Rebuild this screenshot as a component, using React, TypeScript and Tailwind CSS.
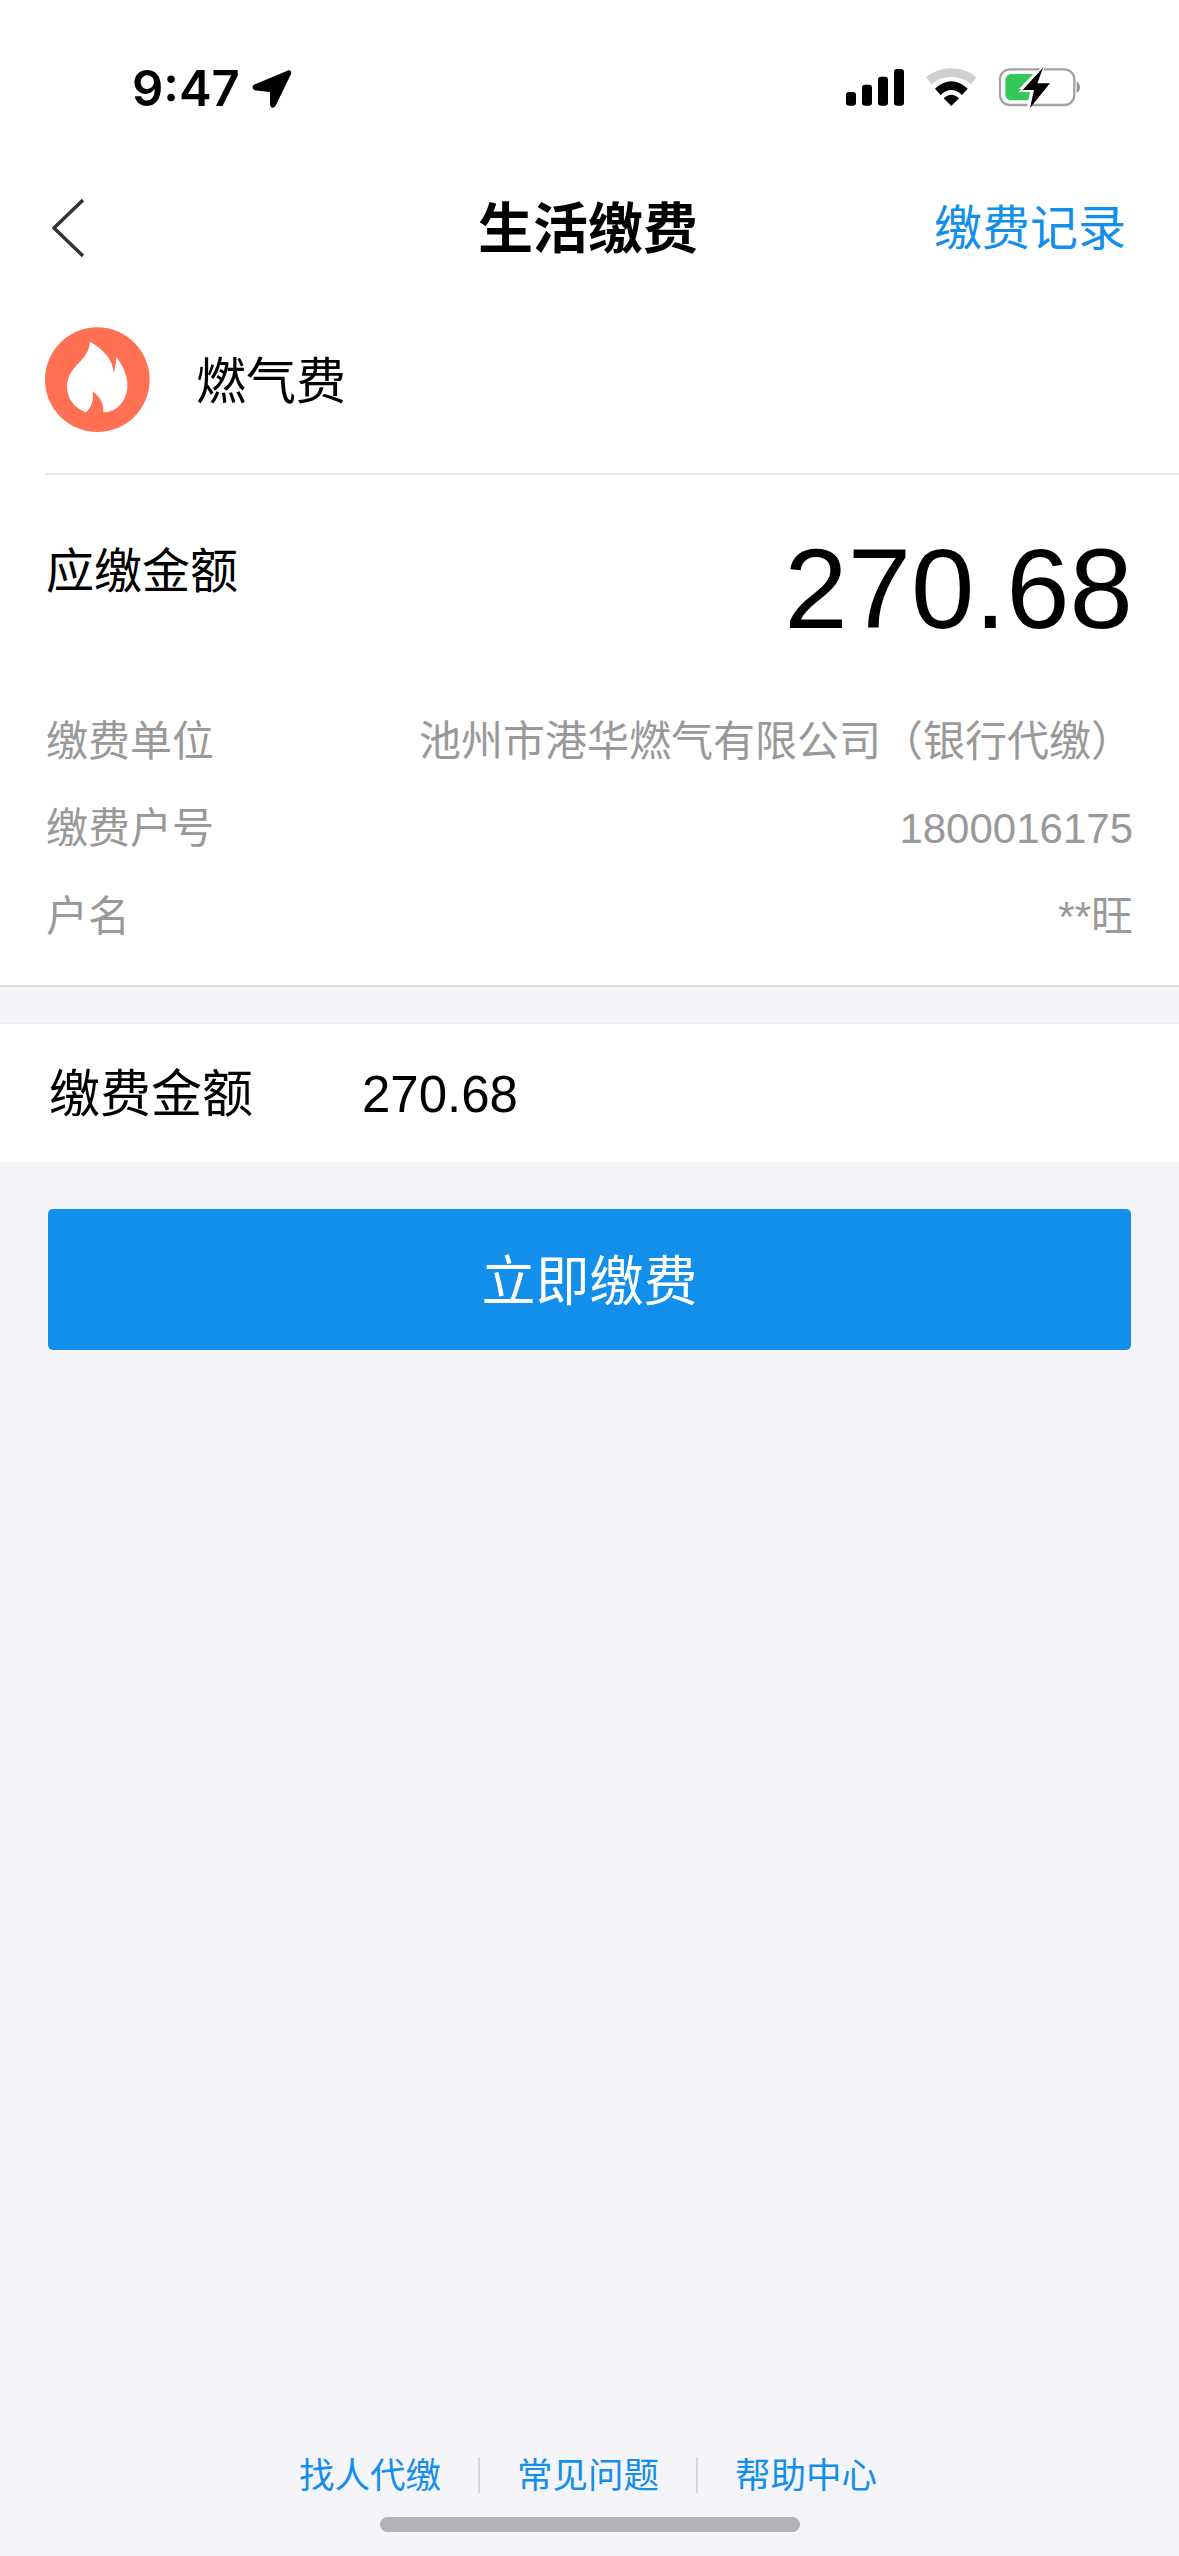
import React from 'react';

const cjk = "font-['Liberation_Sans','Noto_Sans_CJK_SC',sans-serif]";

const details = [
  { label: '缴费单位', value: '池州市港华燃气有限公司（银行代缴）' },
  { label: '缴费户号', value: '1800016175' },
  { label: '户名', value: '**旺' },
];

const footerLinks = ['找人代缴', '常见问题', '帮助中心'];

const StatusIcons = () => (
  <svg width="340" height="90" viewBox="0 0 1020 270">
    {/* signal */}
    <rect x="198" y="156" width="30" height="41" rx="9" fill="#000" />
    <rect x="246" y="134" width="30" height="63" rx="9" fill="#000" />
    <rect x="294" y="110" width="30" height="87" rx="9" fill="#000" />
    <rect x="342" y="87" width="30" height="110" rx="9" fill="#000" />
    {/* wifi */}
    <path d="M438 112 C 482 76, 546 76, 590 112 L 573 133 C 540 104, 488 104, 455 133 Z" fill="#cfcfcf" />
    <path d="M465 146 C 495 116, 533 116, 563 146 L 546 165 C 526 145, 502 145, 482 165 Z" fill="#000" />
    <path d="M491 175 C 506 161, 522 161, 537 175 L 514 198 Z" fill="#000" />
    {/* battery */}
    <rect x="660" y="88" width="223" height="107" rx="30" fill="none" stroke="#a3a3a3" strokeWidth="7" />
    <path d="M890 125 C 902 130, 904 152, 890 158 Z" fill="#8f8f8f" />
    <path d="M696 102 H 760 L 716 148 L 750 148 L 750 181 H 696 C 684 181, 676 173, 676 161 V 122 C 676 110, 684 102, 696 102 Z" fill="#34c759" />
    <path d="M796 70 L 716 156 H 750 L 738 216 L 822 124 H 782 Z" fill="#fff" />
    <path d="M790 82 L 728 150 H 762 L 750 204 L 810 130 H 772 Z" fill="#000" />
  </svg>
);

const FlameIcon = () => (
  <svg width="105" height="105" viewBox="75 80 315 315">
    <circle cx="232" cy="238" r="157" fill="#ff7152" />
    <path
      d="M210 124 C 250 146, 280 180, 281 218 C 285 205, 289 188, 289 170 C 312 200, 324 230, 322 262 C 318 305, 288 336, 250 336 C 252 310, 240 288, 218 274 C 222 300, 214 322, 197 336 C 162 322, 141 295, 141 258 C 141 222, 165 200, 182 182 C 198 165, 208 148, 210 124 Z"
      fill="#fff"
    />
  </svg>
);

export default function App() {
  return (
    <div className={`${cjk} flex h-[2556px] w-[1179px] flex-col overflow-hidden bg-[#f4f4f9] text-black`}>
      <div className="border-b-[2px] border-[#dcdcdc] bg-white">
        {/* status bar */}
        <div className="flex h-[170px] items-start justify-between pl-[132px] pr-[59px]">
          <div className="flex items-center gap-[12px] pt-[64px]">
            <span className="font-['Inter',sans-serif] text-[49px] leading-[50px] font-semibold [font-feature-settings:'case']">9:47</span>
            <svg width="40" height="40" viewBox="0 0 40 40">
              <path d="M36 1.5 C 38 0.5, 40 2.5, 39 5 L 24 36 C 22 40, 18 39.5, 18 35 L 18 23 L 4 21.5 C 0 21, -0.5 17, 2.5 15.5 Z" fill="#000" />
            </svg>
          </div>
          <div className="pt-[40px]">
            <StatusIcons />
          </div>
        </div>

        {/* nav */}
        <div className="grid h-[115px] grid-cols-[1fr_auto_1fr] items-center pl-[50px] pr-[53px]">
          <svg width="36" height="60" viewBox="0 0 36 60">
            <path d="M33 2 L 4 30 L 33 58" fill="none" stroke="#333" strokeWidth="3.5" strokeLinejoin="round" />
          </svg>
          <h1 className="pt-[3px] text-center text-[55px] leading-[70px] font-bold">生活缴费</h1>
          <span className="justify-self-end pt-[2px] text-[48px] leading-[60px] text-[#128eeb]">缴费记录</span>
        </div>

        {/* biller */}
        <div className="ml-[45px] flex h-[190px] items-center gap-[46px] border-b-[2px] border-[#e4e4e4]">
          <FlameIcon />
          <span className="pt-[5px] text-[50px] leading-[60px]">燃气费</span>
        </div>

        {/* amount */}
        <div className="flex items-start justify-between px-[46px] pt-[65px]">
          <span className="pt-[2px] text-[48px] leading-[60px]">应缴金额</span>
          <span className="mt-[-6px] text-[114px] leading-[110px]">270.68</span>
        </div>

        <div className="flex flex-col px-[46px] pt-[54px] pb-[24px]">
          {details.map(row => (
            <div key={row.label} className="flex h-[87.5px] items-center justify-between text-[42px] leading-[60px] text-[#999999]">
              <span>{row.label}</span>
              <span>{row.value}</span>
            </div>
          ))}
        </div>
      </div>

      {/* pay amount */}
      <div className="mt-[36px] flex h-[140px] items-center border-y border-[#eeeeee] bg-white pl-[49px]">
        <span className="w-[313px] pt-[5px] text-[51px] leading-[60px]">缴费金额</span>
        <span className="pt-[5px] text-[51px] leading-[60px]">270.68</span>
      </div>

      <button className="mx-[48px] mt-[46px] h-[141px] rounded-[5px] bg-[#128eeb] pt-[6px] text-[54px] text-white">立即缴费</button>

      {/* footer */}
      <div className="mt-auto flex flex-col items-center">
        <div className="flex items-center pr-[3px] text-[35.5px] leading-[44px] text-[#128eeb]">
          {footerLinks.map((link, i) => (
            <React.Fragment key={link}>
              {i > 0 && <span className="mx-[37px] h-[36px] w-[2px] bg-[#d6d6d6]" />}
              <span className="pt-[2px]">{link}</span>
            </React.Fragment>
          ))}
        </div>
        <div className="mt-[19px] mb-[24px] h-[15px] w-[420px] rounded-full bg-[#b3b3b5]" />
      </div>
    </div>
  );
}
